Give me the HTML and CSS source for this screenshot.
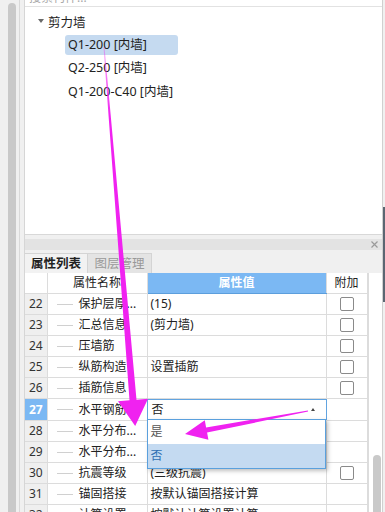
FILE: index.html
```html
<!DOCTYPE html>
<html lang="zh-CN">
<head>
    <meta charset="UTF-8">
    <title>属性列表</title>
    <link rel="stylesheet" href="styles.css">
</head>
<body>
<div class="app">
    <div class="gutter"><div class="thumb"></div></div>

    <div class="main">
        <div class="tree-panel">
            <div class="search"><span>搜索构件...</span></div>
            <div class="tree">
                <div class="node group"><i class="caret"></i>剪力墙</div>
                <div class="node"><span class="item sel">Q1-200 [内墙]</span></div>
                <div class="node"><span class="item">Q2-250 [内墙]</span></div>
                <div class="node"><span class="item">Q1-200-C40 [内墙]</span></div>
            </div>
        </div>

        <div class="titlebar">
            <svg class="close" width="7" height="7" viewBox="0 0 7 7"><path d="M0.5 0.5L6.5 6.5M6.5 0.5L0.5 6.5" stroke="#9a9a9a" stroke-width="1.2"/></svg>
        </div>

        <div class="tabs">
            <div class="tab active">属性列表</div>
            <div class="tab">图层管理</div>
        </div>

        <div class="grid-wrap">
            <table class="grid">
                <colgroup>
                    <col class="c-num"><col class="c-name"><col class="c-val"><col class="c-add">
                </colgroup>
                <tr class="head">
                    <th></th><th>属性名称</th><th class="blue">属性值</th><th>附加</th>
                </tr>
                <tr><td class="num">22</td><td><div class="nm"><i class="tick"></i>保护层厚...</div></td><td class="val">(15)</td><td class="add"><span class="box"></span></td></tr>
                <tr><td class="num">23</td><td><div class="nm"><i class="tick"></i>汇总信息</div></td><td class="val">(剪力墙)</td><td class="add"><span class="box"></span></td></tr>
                <tr><td class="num">24</td><td><div class="nm"><i class="tick"></i>压墙筋</div></td><td class="val"></td><td class="add"><span class="box"></span></td></tr>
                <tr><td class="num">25</td><td><div class="nm"><i class="tick"></i>纵筋构造</div></td><td class="val">设置插筋</td><td class="add"><span class="box"></span></td></tr>
                <tr><td class="num">26</td><td><div class="nm"><i class="tick"></i>插筋信息</div></td><td class="val"></td><td class="add"><span class="box"></span></td></tr>
                <tr><td class="num cur">27</td><td><div class="nm"><i class="tick"></i>水平钢筋...</div></td>
                    <td class="val edit">
                        <div class="combo">否<i class="up"></i></div>
                        <div class="drop">
                            <div class="opt">是</div>
                            <div class="opt on">否</div>
                        </div>
                    </td>
                    <td class="add"></td></tr>
                <tr><td class="num">28</td><td><div class="nm"><i class="tick"></i>水平分布...</div></td><td class="val"></td><td class="add"></td></tr>
                <tr><td class="num">29</td><td><div class="nm"><i class="tick"></i>水平分布...</div></td><td class="val"></td><td class="add"></td></tr>
                <tr><td class="num">30</td><td><div class="nm"><i class="tick"></i>抗震等级</div></td><td class="val">(三级抗震)</td><td class="add"><span class="box"></span></td></tr>
                <tr><td class="num">31</td><td><div class="nm"><i class="tick"></i>锚固搭接</div></td><td class="val">按默认锚固搭接计算</td><td class="add"></td></tr>
                <tr><td class="num">32</td><td><div class="nm"><i class="tick"></i>计算设置</div></td><td class="val">按默认计算设置计算</td><td class="add"></td></tr>
            </table>
            <div class="vbar"><div class="vthumb"></div></div>
        </div>
    </div>

    <div class="edge"><div class="edge-bar"></div></div>
</div>

<!-- annotation arrows drawn over the screenshot -->
<svg class="anno" width="385" height="512" viewBox="0 0 385 512">
    <defs>
        <linearGradient id="fade" gradientUnits="userSpaceOnUse" x1="0" y1="46" x2="0" y2="115">
            <stop offset="0" stop-color="#f022f0" stop-opacity="0.3"/>
            <stop offset="1" stop-color="#f022f0" stop-opacity="1"/>
        </linearGradient>
    </defs>
    <polygon fill="url(#fade)" points="103.5,47 104.5,47 136.5,399.7 148,398.8 135.2,426 118,401.2 129.5,400.3"/>
    <polygon fill="#f022f0" points="308.1,411.6 307.9,410.4 206.1,427.5 204.8,420.2 185,434 208.4,439.8 207.1,432.5"/>
</svg>
</body>
</html>
```

FILE: styles.css
```css
body {
    margin: 0;
    width: 385px;
    height: 512px;
    overflow: hidden;
    position: relative;
    background: #f0f0f0;
    font-family: "Noto Sans", "Noto Sans CJK SC", sans-serif;
    font-size: 12px;
    color: #222;
}

.app {
    display: flex;
    height: 512px;
}

/* left scroller */
.gutter {
    width: 20px;
    box-sizing: border-box;
    padding: 3px 3px 0 8px;
    border-right: 1px solid #d9d9d9;
    margin-right: 4px;
}

.thumb {
    width: 8px;
    height: 100%;
    background: #c9c9c9;
    border-radius: 4px 4px 0 0;
}

.main {
    width: 359px;
    box-sizing: border-box;
    border-left: 1px solid #d6d6d6;
    border-right: 1px solid #d0d0d0;
    display: flex;
    flex-direction: column;
}

.edge {
    width: 2px;
}

.edge-bar {
    margin-top: 207px;
    height: 95px;
    background: #5b6672;
}

/* tree panel */
.tree-panel {
    height: 235px;
    box-sizing: border-box;
    background: #fff;
    border-bottom: 1px solid #d8d8d8;
}

.search {
    height: 6px;
    overflow: hidden;
    border-bottom: 1px solid #e2e2e2;
}

.search span {
    display: block;
    margin-top: -9px;
    padding-left: 4px;
    line-height: 14px;
    color: #a8a8a8;
}

.tree {
    padding-top: 2px;
}

.node {
    height: 23.5px;
    display: flex;
    align-items: center;
    padding-left: 40px;
}

.node.group {
    height: 24px;
    padding-left: 13px;
    font-size: 12.5px;
}

.caret {
    width: 0;
    height: 0;
    border-left: 3.5px solid transparent;
    border-right: 3.5px solid transparent;
    border-top: 4px solid #6a6a6a;
    margin-right: 4px;
}

.item {
    display: inline-block;
    height: 20px;
    line-height: 20px;
    padding-left: 3px;
    border-radius: 3px;
    font-size: 12.5px;
}

.item.sel {
    width: 110px;
    background: #c5daf0;
}

/* property panel */
.titlebar {
    height: 11px;
    margin-top: 4px;
    background: #e3e3e3;
    display: flex;
    align-items: center;
    justify-content: flex-end;
    padding-right: 4px;
}

.tabs {
    height: 23px;
    display: flex;
    align-items: flex-end;
}

.tab {
    width: 63px;
    box-sizing: border-box;
    height: 20px;
    line-height: 20px;
    text-align: center;
    font-size: 12.5px;
    border-top: 1px solid #d4d4d4;
    border-right: 1px solid #d4d4d4;
    color: #999;
    background: #e4e4e4;
    white-space: nowrap;
}

.tab + .tab {
    width: 64px;
}

.tab.active {
    color: #222;
    font-weight: 600;
    background: #f2f2f2;
}

.grid-wrap {
    flex: 1;
    display: flex;
    background: #fff;
    overflow: hidden;
}

.grid {
    width: 342px;
    table-layout: fixed;
    border-collapse: collapse;
    flex: none;
}

.c-num { width: 22px; }
.c-name { width: 100px; }
.c-val { width: 179px; }
.c-add { width: 41px; }

.grid th,
.grid td {
    height: 20px;
    padding: 0;
    border: 1px solid #dcdcdc;
    line-height: 20px;
    white-space: nowrap;
    overflow: visible;
}

.grid tr:first-child th {
    border-top: none;
}

.grid th {
    font-weight: normal;
    text-align: center;
    background: #fff;
}

.grid tr > :first-child {
    border-left: none;
}

.grid th.blue {
    background: #7bb8f3;
    color: #fff;
    font-weight: 600;
    border-bottom: 1px solid #5c9edc;
}

.num {
    text-align: center;
    background: #efefef;
    color: #333;
}

.num.cur {
    background: #7bb8f3;
    color: #fff;
    font-weight: 700;
}

.nm {
    display: flex;
    align-items: center;
    overflow: hidden;
}

.tick {
    width: 16px;
    height: 1px;
    background: #d0d0d0;
    margin: 0 6px 0 9px;
    flex: none;
}

.val {
    padding-left: 3px !important;
}

.add {
    text-align: center;
}

.box {
    display: inline-block;
    width: 12px;
    height: 12px;
    border: 1px solid #8a8a8a;
    border-radius: 2px;
    vertical-align: middle;
    margin-top: -2px;
}

/* combo editor in row 27 */
.val.edit {
    position: relative;
    padding-left: 0 !important;
}

.combo {
    height: 19px;
    line-height: 19px;
    border: 1px solid #62a4e0;
    margin: 0 -1px 0 -1px;
    padding-left: 4px;
    display: flex;
    align-items: center;
    background: #fff;
}

.up {
    width: 0;
    height: 0;
    margin-left: auto;
    margin-right: 11px;
    border-left: 2.5px solid transparent;
    border-right: 2.5px solid transparent;
    border-bottom: 3px solid #444;
}

.drop {
    position: absolute;
    top: 20px;
    left: -1px;
    width: 177px;
    background: #fff;
    border: 1px solid #5aa0dd;
    box-shadow: 2px 2px 4px rgba(0, 0, 0, 0.25);
    z-index: 2;
}

.opt {
    height: 24px;
    line-height: 24px;
    padding-left: 3px;
    color: #555;
}

.opt.on {
    background: #c4daf1;
    color: #2f6fb3;
}

.vbar {
    flex: 1;
    border-left: 1px solid #dcdcdc;
}

.vthumb {
    width: 8px;
    height: 100px;
    margin: 182px 0 0 4px;
    background: #c9c9c9;
    border-radius: 4px 4px 0 0;
}

.anno {
    position: absolute;
    top: 0;
    left: 0;
    pointer-events: none;
    z-index: 5;
}
```
